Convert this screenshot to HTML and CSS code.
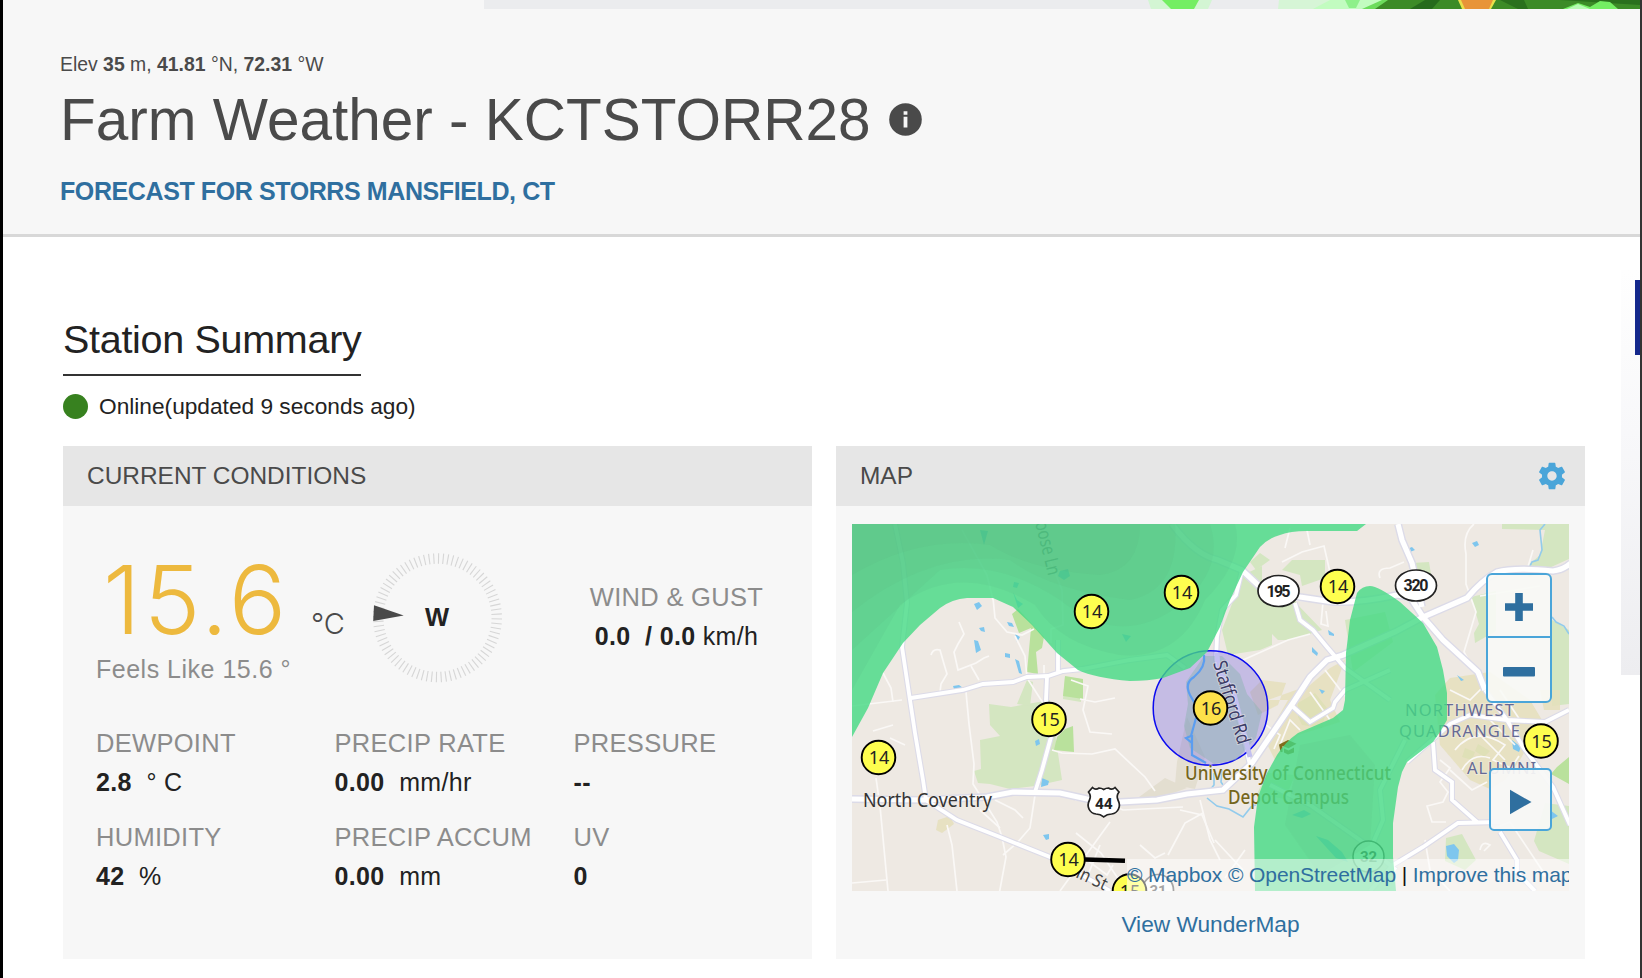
FILE: index.html
```html
<!DOCTYPE html>
<html lang="en">
<head>
<meta charset="utf-8">
<title>Farm Weather - KCTSTORR28</title>
<link rel="stylesheet" href="styles.css">
</head>
<body>
<div class="page">
  <header class="station-header">
    <svg class="radar-strip" viewBox="484 0 1156 9" preserveAspectRatio="none" aria-hidden="true">
      <rect x="484" width="1156" height="9" fill="#ebecee"/>
      <path d="M1148 0h64l-4 9h-57z" fill="#d3f5d3"/><path d="M1162 0h37l-5 9h-23z" fill="#74ee63"/>
      <path d="M1279 0h361v9h-362z" fill="#d6f5d6"/><path d="M1330 0h310v9h-327z" fill="#c2fcc0"/>
      <path d="M1345 0h15l-4 8h-7z" fill="#8ef08a"/>
      <path d="M1382 0h258v9h-278z" fill="#6cdc5c"/><path d="M1388 0h252v9h-265z" fill="#3c8b27"/>
      <path d="M1425 0h15l-8 9h-22z" fill="#266b1c"/><path d="M1500 0l18 9h10l-4-9zM1560 0h80v5z" fill="#2a701d"/>
      <path d="M1458 0h38l-5 9h-29z" fill="#e8e04a"/><path d="M1461 0h32l-4 9h-24z" fill="#e89438"/>
      <path d="M1563 9l15-6 12 4 10-6 10 1 8 7z" fill="#74ee63"/><path d="M1567 9l11-5 12 5z" fill="#b6fbb2"/>
    </svg>
    <div class="station-info">
      <p class="coords">Elev <b>35</b> m, <b>41.81</b> °N, <b>72.31</b> °W</p>
      <h1 class="station-name"><span>Farm Weather - KCTSTORR28</span>
        <svg class="info-icon" viewBox="0 0 33 33"><circle cx="16.5" cy="16.5" r="16.3" fill="#4a4a4a"/><path d="M14.6 8.2h3.8v3.6h-3.8zM14.6 13.8h3.8v10.7h-3.8z" fill="#f7f7f7"/></svg>
      </h1>
      <a class="forecast-link">FORECAST FOR STORRS MANSFIELD, CT</a>
    </div>
  </header>

  <div class="content">
    <main class="main">
      <h2 class="summary-title">Station Summary</h2>
      <p class="status"><span class="status-dot"></span><span>Online(updated 9 seconds ago)</span></p>
      <div class="panels">
        <section class="panel">
          <h3 class="panel-head"><span>CURRENT CONDITIONS</span></h3>
          <div class="conditions">
            <div class="top-row">
              <div class="temp">
                <div class="temp-main"><span class="temp-value">15.6</span><span class="temp-unit">°C</span></div>
                <p class="feels">Feels Like 15.6 °</p>
              </div>
              <svg class="compass" viewBox="-66.500 -65.800 132 132">
                <defs>
                  <path id="tick" d="M0 -64.500V-54"/>
                  <g id="ticks4"><use href="#tick"/><use href="#tick" transform="rotate(4.5)"/><use href="#tick" transform="rotate(9)"/><use href="#tick" transform="rotate(13.5)"/></g>
                  <g id="ticks20"><use href="#ticks4"/><use href="#ticks4" transform="rotate(18)"/><use href="#ticks4" transform="rotate(36)"/><use href="#ticks4" transform="rotate(54)"/><use href="#ticks4" transform="rotate(72)"/></g>
                </defs>
                <g stroke="#d6d6d6" stroke-width="1.100" transform="rotate(1)"><use href="#ticks20"/><use href="#ticks20" transform="rotate(90)"/><use href="#ticks20" transform="rotate(180)"/><use href="#ticks20" transform="rotate(270)"/></g>
                <path d="M-63.500 -12.500l-.8 15.800 30.500-5.600z" fill="#4a4a4a"/>
                <text x="-.5" y="8" class="compass-dir">W</text>
              </svg>
              <div class="wind">
                <div class="label">WIND &amp; GUST</div>
                <div class="value"><b>0.0</b>&nbsp; <b>/ 0.0</b> km/h</div>
              </div>
            </div>
            <div class="metrics">
              <div><div class="label">DEWPOINT</div><div class="value"><b>2.8</b>&nbsp; ° C</div></div>
              <div><div class="label">PRECIP RATE</div><div class="value"><b>0.00</b>&nbsp; mm/hr</div></div>
              <div><div class="label">PRESSURE</div><div class="value"><b>--</b></div></div>
              <div><div class="label">HUMIDITY</div><div class="value"><b>42</b>&nbsp; %</div></div>
              <div><div class="label">PRECIP ACCUM</div><div class="value"><b>0.00</b>&nbsp; mm</div></div>
              <div><div class="label">UV</div><div class="value"><b>0</b></div></div>
            </div>
          </div>
        </section>

        <section class="panel">
          <h3 class="panel-head"><span>MAP</span>
            <svg class="gear" viewBox="0 0 24 24"><path fill="#4aa5d9" d="M19.43 12.98c.04-.32.07-.64.07-.98s-.03-.66-.07-.98l2.11-1.65c.19-.15.24-.42.12-.64l-2-3.46c-.12-.22-.39-.3-.61-.22l-2.49 1c-.52-.4-1.08-.73-1.69-.98l-.38-2.65C14.46 2.18 14.25 2 14 2h-4c-.25 0-.46.18-.49.42l-.38 2.65c-.61.25-1.17.59-1.69.98l-2.49-1c-.23-.09-.49 0-.61.22l-2 3.46c-.13.22-.07.49.12.64l2.11 1.65c-.04.32-.07.65-.07.98s.03.66.07.98l-2.11 1.65c-.19.15-.24.42-.12.64l2 3.46c.12.22.39.3.61.22l2.49-1c.52.4 1.08.73 1.69.98l.38 2.65c.03.24.24.42.49.42h4c.25 0 .46-.18.49-.42l.38-2.65c.61-.25 1.17-.59 1.69-.98l2.49 1c.23.09.49 0 .61-.22l2-3.46c.12-.22.07-.49-.12-.64l-2.11-1.65zM12 15.5c-1.93 0-3.5-1.57-3.5-3.5s1.57-3.5 3.5-3.5 3.5 1.57 3.5 3.5-1.57 3.5-3.5 3.5z"/></svg>
          </h3>
          <div class="map-body">
            <div class="map">
              <svg class="map-canvas" viewBox="852 524 717 367">
                <defs>
                  <path id="hwy" d="M852 799L923 800L987 797L1013 792L1060 793L1087 799L1120 802L1157 800L1187 794L1223 790L1252 763L1293 703L1310 677L1327 660L1343 655L1395 632L1423 617L1467 598Q1482 580 1497 572Q1515 567 1553 571Q1563 570 1571 563M1172 524Q1195 555 1218 560L1242 570L1260 587L1300 597L1333 602Q1360 603 1397 595L1410 597L1423 617L1443 640L1478 672L1485 690M1398 524L1402 540L1412 563L1422 607"/>
                  <path id="main" d="M895 524L903 563L907 603L902 647L910 700L915 733L923 780L926 800L957 820L1000 837L1050 857L1110 891M911 698L963 690L983 684L1013 682L1027 677L1048 676L1063 671L1082 669L1130 660L1167 655L1185 668M1058 640V673M1047 677L1046 700L1051 737L1042 770L1035 792M1295 603L1300 620L1313 630L1327 647L1345 668L1390 700M1390 670L1345 690L1335 702L1333 708L1310 722L1291 705M1217 637L1216 660L1232 690L1250 765M1242 570L1236 595L1222 610L1217 637M1433 742L1435 770L1452 782L1452 800L1477 822M1500 822L1458 823L1423 847L1393 865L1370 891M1485 690L1507 720L1523 747L1553 787L1570 825M1500 832L1517 860V872L1535 891M1569 710L1545 722L1507 720L1470 715L1450 724L1407 762M1270 785L1310 805L1360 840L1396 870M1405 740L1380 790L1383 820L1370 850"/>
                  <path id="rain-west" d="M852 737L868 708L883 673L903 643L920 625L940 608Q952 599 967 598H993L1013 607L1032 625L1057 653L1078 670Q1095 678 1130 681Q1148 681 1163 678L1190 668L1207 652L1220 627L1230 600L1243 572L1260 547Q1268 538 1280 535Q1290 531 1307 531H1357L1366 524H852z"/>
                </defs>
                <rect x="852" y="524" width="717" height="367" fill="#eee9e3"/>
                <g fill="#d4e6c1">
                  <path d="M1011 707L1050 700L1062 780L1035 786L1010 789L990 784L978 783L974 771L981 769L980 740L1000 736L990 725L989 704z"/>
                  <path d="M1243 575L1262 566L1262 580L1287 586L1297 604L1322 630L1290 640L1278 640L1272 634L1272 645L1260 650L1228 655L1222 630z"/>
                  <path d="M1292 560H1325V578L1302 586L1300 575L1282 570z"/>
                  <path d="M1412 563l17-1 2 12-10 8-9-3zM1502 524h67v35l-40 18-4-9 15-13 5-25-43-1z"/>
                  <path d="M1552 620l17 10v74l-17 2zM1471 597l25-6v40l-21 12-1-10 5-9zM1270 560l-10-7-10 9 6 8z"/>
                  <path d="M1446 838l16-4 14 26-11 10-20-9zM1545 803l24 3v58l-30-13-5-10zM1027 680l6 2-3 24-13-2z"/>
                  <path d="M1065 677l16 2v23l-18-3zM1345 620l40-8 8 30-40 30zM1267 773l28 2-10 24-28-5z"/>
                </g>
                <g fill="#b9e19c">
                  <path d="M1018 609L1012 614L1019 633L1031 628L1027 672L1038 674L1036 652L1042 648L1044 637z"/>
                  <path d="M1065 676l18 3v20l-20-3zM1065 729l8-3 1 26-20-2 3-13zM1298 703l17-10 12 15-5 20-20-3-4-8z"/>
                  <path d="M1465 748l10 4-3 8-10-3zM1478 744l12 7-6 6-9-6zM1557 767l12-10v27l-18-10z"/>
                </g>
                <g fill="#e5dfbc">
                  <path d="M1435 695L1450 678L1490 672L1530 700L1542 720L1520 760L1505 780L1490 789L1470 780L1440 745zM1268 700L1288 700L1265 740L1275 760L1298 735L1340 722L1330 700L1345 660L1330 668L1310 685zM1540 690h20v20h-16zM1250 692l12-12 24 3-8 22-20 10zM938 820l12-4 4 8-12 9-6-3z" opacity=".85"/>
                  <path d="M1177 762l10-45 18 40-10 32-20-4zM1135 800l30-22 22 10-30 11z" fill="#e3ded0"/>
                </g>
                <g fill="#7ec6ee">
                  <path d="M974 604l5-2 3 4-5 4zM979 628l5-1 1 5-4-1zM974 640l4 1 3 9-5 3zM1007 622l5 1 2 4-5-1zM1015 634l5 3-3 5zM1005 653l5 1v4l-5-1zM1015 659l4 2 3 13-3-1zM953 686l6-1 4 3-9 1zM1035 741l4-2 1 5-4 2zM1042 778l7 3-1 4-7 2zM1043 835l6-1v5l-3 1z"/>
                  <path d="M1407 549l5-2 3 3-5 2zM1472 543l5-2 2 4-4 2zM1328 630l6 4v2l-5-1zM1312 647l6 6-1 3-5-4zM1319 689l6 2-3 3zM1457 675l7 5-3 1zM1512 740l9 7-2 5-6-3zM1550 810l8 6-6 3zM1446 846l8-2 5 6-1 10-4 3-7-7z"/>
                  <path d="M980 530l8 1-4 14zM1060 571l8-2 2 7-6 4-6-4zM1014 582l5 1-2 5-4-1zM1013 592l4 8 6 4-5 4zM1122 634l9 2-5 6zM1292 815l12-5 7 4-9 4zM1316 836l12 4 14 12 6 10-12-4z"/>
                </g>
                <g fill="none" stroke="#92cbec" stroke-width="1.6">
                  <path d="M1545 524l-5 6 2 20-4 10-6 2-3 6M1552 617l4 5 8 4 5 8M1207 798l10 8 12 3 14 8 8-10 8-4M1214 773v12l-5 6M1222 770l-1 12 4 6"/>
                </g>
                <g fill="none" stroke="#faf8f6" stroke-width="1.7">
                  <path d="M959 622l5 12-6 10-4 8 4 18 18-7 8-5 5-2M971 666l8 14M931 655q2-7 9-5l4 14 3 10-6 10-1 8M993 598l2 20 12 14 15 3 12-6M1015 636l10 20 2 22 16 25M1044 665v14M852 706l50-6M883 673l8 15 2 14M962 530l25 45 6 25M1050 560l12 30 1 35-12 4v14"/>
                  <path d="M876 778l4 28 8 85M852 883l34-3M893 725l-20 6M905 745l-15-7M966 692l3 32 5 40-1 20 24 38 5 15 4 20-10 54M947 825l5 20 5 46M1035 795l-5 33-13 15-14 12M1071 680l17 6-5 24 7 22 22 2M1080 699l15 3 20-4M1052 750l10 3 30 1 23-5 30 28 10 14M1140 845l15 13 10-5M1110 822l-50 69M1200 800l10 40 10 20M1076 833l25 20 20 30M1168 855l17-32 18-10M1087 860l20 15 6-10M1100 845l-12 30"/>
                  <path d="M1285 548l5-20M1282 562l20-10 22-6 8 35M1310 545l-3-15M1295 600l28 2-2 22 7 2-2-15M1243 660l45-20 22-6M1325 670l20 26M1380 578q-4-10 10-10l14-6M1474 524q-12 10-8 30v30l10 28-12 40 12 22M1533 550l-6 20M1480 596l60-10M1440 760l10 8-10 14 8 10-5 10-16 4 5 16 14 0M1490 830l20-8 40 60M1480 850q2-10 10-5l-6 6M1537 870l10 7M1215 840l28 30M1245 850l-20 28M1425 840l5 30 20 21"/>
                  <path d="M1455 750q20-25 50-5l-12 15 18 8 8-12M1462 770q10-18 28-12M1450 770l22 20 15-8M1475 730l30 30M1490 720l25 25M1280 745l10-25 10 10M1450 690l20 10 15-15M1500 690l20 30M1310 692l20 28M1266 725l14 10-6 14M1075 800l28 2 20 8 60-3M1180 810l22 5 12 28M980 810l20 18M995 800l20 10 8 8"/>
                </g>
                <use href="#main" fill="none" stroke="#dcdbe8" stroke-width="6"/>
                <use href="#hwy" fill="none" stroke="#dcdbe8" stroke-width="8"/>
                <use href="#main" fill="none" stroke="#fff" stroke-width="3.8"/>
                <use href="#hwy" fill="none" stroke="#fff" stroke-width="5.2"/>
                <circle cx="1210.500" cy="708" r="57.300" fill="#4a38e8" fill-opacity=".25" stroke="#0b0bf0" stroke-width="1.500"/>
                <path d="M1204 656h18l18 18 7 20 15 18-6 26-20 22-22 4-24-16-6-22 4-22-2-22z" fill="#8fb3b3" opacity=".5"/>
                <path d="M1204 655q2 12-10 22-10 6-4 18l8 14M1196 718l-5 18-5 2 6 5M1192 735v20l14 8" fill="none" stroke="#5b9df0" stroke-width="2.200"/>
                <path d="M1217 653L1218 670L1233 690L1250 757" fill="none" stroke="#c2bff0" stroke-width="5"/>
                <g class="place">
                  <text x="863" y="807" textLength="129" lengthAdjust="spacingAndGlyphs" fill="#333" font-size="20.5">North Coventry</text>
                  <text x="1185" y="780" textLength="206" lengthAdjust="spacingAndGlyphs" fill="#75661c" font-size="20" font-weight="500">University of Connecticut</text>
                  <text x="1228" y="803.5" textLength="121" lengthAdjust="spacingAndGlyphs" fill="#75661c" font-size="20" font-weight="500">Depot Campus</text>
                  <text x="1405" y="716" textLength="109" fill="#666a94" font-size="16.500">NORTHWEST</text>
                  <text x="1399" y="736.5" textLength="121" fill="#666a94" font-size="16.500">QUADRANGLE</text>
                  <text x="1467" y="774" textLength="69" fill="#666a94" font-size="16.500">ALUMNI</text>
                  <text transform="translate(1035 523) rotate(76)" textLength="55" lengthAdjust="spacingAndGlyphs" fill="#77787c" font-size="19">oose Ln</text>
                </g>
                <path d="M1279 744.500l9-4.500 8.500 3.800-8 4.400-6-2.200v6h-2z" fill="#806c1c"/><path d="M1284 748.500l4.500 2 5.500-3v5l-6 2-4-2z" fill="#806c1c"/>
                <g class="shield">
                  <circle cx="1368.500" cy="856.500" r="15.500" fill="#fff" stroke="#333" stroke-width="1.500"/><text x="1368.500" y="862" font-size="15">32</text>
                </g>
                <g class="radar">
                  <use href="#rain-west"/>
                  <path d="M1370 586Q1378 586 1400 602L1423 623L1437 647L1443 670L1447 693V720L1440 732L1433 742L1407 762L1402 772L1398 787L1393 823V857L1396 891H1255L1254 827L1258 797L1267 773L1277 755Q1285 742 1298 733L1333 718L1343 710L1345 700L1346 653L1350 620L1357 593Q1362 586 1370 586z"/>
                </g>
                <g fill="#4f9a78" opacity=".09">
                  <path d="M852 524H1235Q1245 560 1205 600Q1180 660 1120 655Q1060 645 1035 605Q960 560 900 605L852 690z"/>
                </g>
                <g fill="#4f9a78" opacity=".07"><path d="M852 524H1210Q1225 570 1180 605Q1120 650 1060 600Q1000 560 940 570L852 650z"/></g>
                <g fill="#4f9a78" opacity=".07"><path d="M852 524H1175Q1180 590 1130 600Q1050 590 1010 560Q930 550 852 612z"/></g>
                <g fill="#4f9a78" opacity=".07"><path d="M852 524H1140Q1140 570 1100 575Q1030 570 990 545Q920 535 852 575z"/></g>
                <g fill="#4f9a78" opacity=".07"><path d="M1300 745l50-10 25 30-5 80-50 30-35-50z"/></g>
                <g class="shield">
                  <ellipse cx="1278.500" cy="591" rx="20.500" ry="15.500" class="plate"/><text x="1278.500" y="596.500" font-size="16" textLength="24">195</text>
                  <ellipse cx="1416" cy="585.500" rx="20.500" ry="15.500" class="plate"/><text x="1416" y="590.500" font-size="16" textLength="25">320</text>
                  <path class="plate" d="M1092.500 787.500q3 3 6.500 0.500 2.500 0 4.700 1.500 2.300-1.500 4.800-1.500 3.500 2.500 6.500-.5l4 4.500q-3 4-1 8 2.500 5 .5 9-2 4.500-7 5-4.500 0-7.800 2.800-3.200-2.800-7.700-2.800-5-.5-7-5-2-4 .5-9 2-4-1-8z"/><text x="1103.800" y="808.500" font-size="15.500">44</text>
                </g>
                <g class="place"><text transform="translate(1075 877) rotate(25)" textLength="32" lengthAdjust="spacingAndGlyphs" fill="#444" font-size="18">in St</text>
                <text transform="translate(1213 663) rotate(73)" textLength="86" lengthAdjust="spacingAndGlyphs" fill="#3b3b66" font-size="19" stroke-width="0">Stafford Rd</text></g>
                <path d="M1085 859.500l40 1.200" stroke="#000" stroke-width="4.600"/>
                <g class="shield" opacity=".8"><circle cx="1158" cy="890" r="15.500" class="plate"/><text x="1158" y="896" font-size="15">31</text></g>
                <g class="stations">
                  <circle cx="1091.500" cy="611.500" r="16.800"/><text x="1092" y="618">14</text>
                  <circle cx="1181.500" cy="592.500" r="16.800"/><text x="1182" y="599">14</text>
                  <circle cx="1337.500" cy="586.500" r="16.800"/><text x="1338" y="593">14</text>
                  <circle cx="1049" cy="719.500" r="16.800"/><text x="1049.500" y="726">15</text>
                  <circle cx="878.500" cy="757.500" r="16.800"/><text x="879" y="764">14</text>
                  <circle cx="1210.500" cy="708" r="16.800" class="current"/><text x="1211" y="714.500">16</text>
                  <circle cx="1541" cy="741" r="16.800"/><text x="1541.500" y="747.500">15</text>
                  <circle cx="1068" cy="859.500" r="16.800"/><text x="1068.500" y="866">14</text>
                  <circle cx="1129.500" cy="891" r="16.800"/><text x="1130" y="897.500">15</text>
                </g>
              </svg>
              <div class="zoom-control">
                <button class="map-btn"><svg viewBox="0 0 32 32"><path d="M12.200 2h7.600v10.300H30v7.500H19.800V30h-7.600V19.800H2v-7.500h10.200z" fill="#2f6f9f"/></svg></button>
                <button class="map-btn"><svg viewBox="0 0 32 32"><rect y="11" width="32" height="9.500" rx="1" fill="#2f6f9f"/></svg></button>
              </div>
              <button class="play"><svg viewBox="0 0 22 26"><path d="M0 0.800L21.500 13L0 25.200z" fill="#2f6f9f"/></svg></button>
              <div class="attribution"><a>© Mapbox</a> <a>© OpenStreetMap</a> | <a>Improve this map</a></div>
            </div>
            <a class="wunder">View WunderMap</a>
          </div>
        </section>
      </div>
    </main>
    <aside class="ad"><div class="ad-logo"></div></aside>
  </div>
</div>
</body>
</html>
```
FILE: styles.css
```css
* { box-sizing: border-box; }
body { margin: 0; background: #fff; font-family: "Liberation Sans", Arial, sans-serif; color: #222; }
h1, h2, h3, p { margin: 0; font-weight: 400; }
.page { width: 1642px; height: 978px; overflow: hidden; border-left: 3px solid #000; border-right: 2px solid #333; display: flex; flex-direction: column; }

.station-header { height: 237px; flex: none; background: #f7f7f7; border-bottom: 3px solid #d8d8d8; display: flex; flex-direction: column; color: #4a4a4a; }
.radar-strip { width: 1156px; height: 9px; align-self: flex-end; flex: none; }
.station-info { padding: 43px 0 0 57px; }
.coords { font-size: 19.4px; line-height: 24px; white-space: nowrap; }
.station-name { display: flex; align-items: center; gap: 18.500px; font-size: 58.500px; line-height: 70px; margin-top: 9px; white-space: nowrap; }
.info-icon { width: 33px; height: 33px; margin-bottom: 2px; }
.forecast-link { display: block; margin-top: 21px; font-size: 25px; letter-spacing: -.4px; line-height: 30px; font-weight: 700; color: #2f6f9f; }

.content { display: flex; justify-content: space-between; flex: 1; }
.main { width: 1522px; margin-left: 60px; padding-top: 77px; flex: none; }
.summary-title { width: max-content; font-size: 39.500px; letter-spacing: -.3px; line-height: 50px; padding-bottom: 10px; border-bottom: 2px solid #333; }
.status { display: flex; align-items: center; gap: 11px; margin-top: 15px; height: 30px; font-size: 22.700px; }
.status-dot { width: 25px; height: 25px; border-radius: 50%; background: #37811f; }
.panels { display: grid; grid-template-columns: 749px 749px; gap: 24px; margin-top: 25px; }
.panel { height: 513px; background: #f7f7f7; }
.panel-head { height: 60px; padding: 0 17px 0 24px; background: #e6e6e6; color: #4a4a4a; display: flex; align-items: center; justify-content: space-between; font-size: 24.450px; }
.gear { width: 32px; height: 32px; }

.conditions { padding: 46px 0 0 33px; }
.top-row { display: flex; height: 168px; }
.temp { width: 275px; flex: none; }
.temp-main { display: flex; align-items: baseline; height: 102px; padding-left: 7px; line-height: 94px; }
.temp-value { width: 208px; font-family: Inter, Roboto, sans-serif; font-weight: 300; font-size: 95.500px; letter-spacing: 3.200px; color: #edb93e; }
.temp-unit { font-family: Inter, sans-serif; font-weight: 300; font-size: 29px; color: #4a4a4a; }
.feels { font-size: 25px; letter-spacing: .5px; line-height: 30px; color: #8c8c8c; white-space: nowrap; }
.compass { width: 132px; height: 132px; flex: none; }
.compass-dir { font: 700 25.500px "Liberation Sans", sans-serif; text-anchor: middle; fill: #222; }
.wind { flex: 1; padding: 30px 45px 0 83px; text-align: center; white-space: nowrap; }
.label { font-size: 25.500px; letter-spacing: .3px; line-height: 30px; color: #8c8c8c; white-space: nowrap; position: static; }
.value { font-size: 25px; letter-spacing: .35px; line-height: 30px; margin-top: 9px; white-space: nowrap; }
.metrics { display: grid; grid-template-columns: 238.500px 239px 1fr; row-gap: 25px; padding-top: 8px; }

.map-body { padding: 18px 16px 0; display: flex; flex-direction: column; align-items: center; }
.map { position: relative; width: 717px; height: 367px; overflow: hidden; }
.map-canvas { display: block; width: 717px; height: 367px; }
.place text { font-family: "Noto Sans", sans-serif; paint-order: stroke; stroke: #f1ede8; stroke-width: 2px; stroke-opacity: .5; }
.radar { fill: #44d983; fill-opacity: .8; }
.shield text { font-family: Roboto, sans-serif; font-weight: 700; text-anchor: middle; fill: #222; }
.plate { fill: #fff; stroke: #222; stroke-width: 1.700; }
.stations circle { fill: #fefe4f; stroke: #000; stroke-width: 1.900; }
.stations .current { fill: #fde14a; }
.stations text { font: 18px "Noto Sans", sans-serif; text-anchor: middle; fill: #222; }
.zoom-control { position: absolute; right: 17px; top: 49px; width: 66px; height: 130px; border: 2px solid #4aa5d9; border-radius: 6px; background: rgba(248,250,246,.9); display: flex; flex-direction: column; }
.map-btn { flex: 1; display: flex; align-items: center; justify-content: center; padding: 2px 0 0; border: 0; background: none; }
.map-btn + .map-btn { border-top: 2px solid #4aa5d9; padding-top: 4px; }
.map-btn svg { width: 32px; height: 32px; }
.play { position: absolute; right: 17px; top: 244px; width: 63px; height: 63px; border: 2px solid #4aa5d9; border-radius: 5px; background: rgba(248,248,246,.93); display: flex; align-items: center; justify-content: center; padding: 4px 0 0 0; }
.play svg { width: 22px; height: 26px; }
.attribution { position: absolute; right: 0; bottom: 0; width: 442px; height: 32px; padding-right: 9px; background: rgba(255,255,255,.5); font-size: 21px; letter-spacing: -.1px; line-height: 32px; text-align: right; white-space: nowrap; color: #111; }
.attribution a, .wunder { color: #2f6f9f; }
.wunder { margin-top: 19px; font-size: 22.700px; line-height: 28px; }

.ad { width: 19px; height: 405px; margin-top: 33px; background: linear-gradient(#fefefe, #f8f8fa 40%, #ededf0); display: flex; justify-content: flex-end; padding-top: 10px; }
.ad-logo { width: 5px; height: 75px; background: #14288c; }
```
